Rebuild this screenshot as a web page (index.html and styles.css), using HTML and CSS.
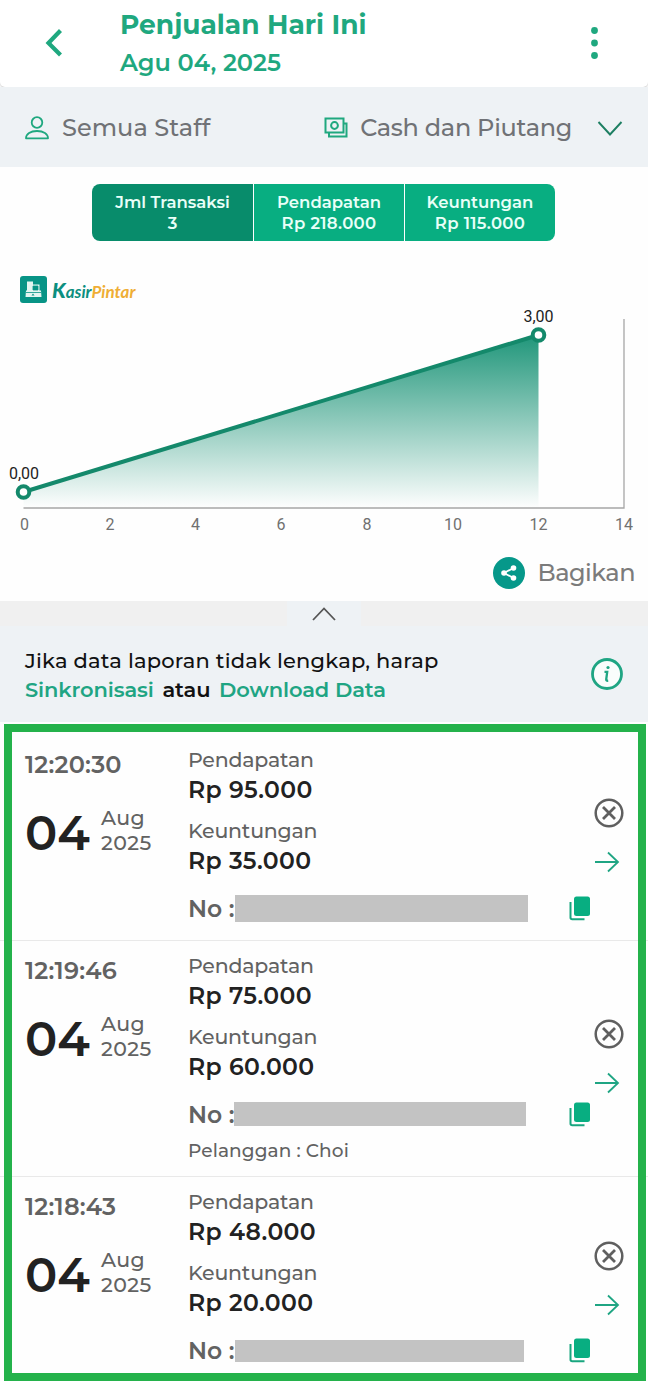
FILE: index.html
```html
<!DOCTYPE html>
<html lang="id">
<head>
    <meta charset="UTF-8">
    <title>Penjualan Hari Ini</title>
    <link rel="stylesheet" href="styles.css">
</head>
<body>
<svg class="sprite" width="0" height="0">
    <symbol id="icon-cancel" viewBox="0 0 30 30">
        <circle cx="15" cy="15" r="13.3" fill="none" stroke="#5f5f5f" stroke-width="2.5"/>
        <path d="M9 9l12 12M21 9L9 21" fill="none" stroke="#5f5f5f" stroke-width="2.8"/>
    </symbol>
    <symbol id="icon-arrow" viewBox="0 0 26 22">
        <path d="M1 11h23M14 1.5L24 11l-10 9.500" fill="none" stroke="#1fa583" stroke-width="1.8"/>
    </symbol>
    <symbol id="icon-copy" viewBox="0 0 22 25">
        <rect x="5" y="0.500" width="16" height="19.500" rx="2.500" fill="#08ae81"/>
        <path d="M1.500 6v15.500q0 1.700 1.700 1.700H15.500" fill="none" stroke="#18a67f" stroke-width="2"/>
    </symbol>
</svg>

<header class="header">
    <svg class="back" width="20" height="30" viewBox="0 0 20 30">
        <path d="M17.500 2.500L5.500 15l12 12" fill="none" stroke="#1fa87f" stroke-width="4.200"/>
    </svg>
    <div class="heading">
        <h1>Penjualan Hari Ini</h1>
        <p>Agu 04, 2025</p>
    </div>
    <svg class="more" width="8" height="34" viewBox="0 0 8 34">
        <g fill="#1fa87f">
            <circle cx="4.500" cy="4.500" r="3.400"/>
            <circle cx="4.500" cy="17" r="3.400"/>
            <circle cx="4.500" cy="29.500" r="3.400"/>
        </g>
    </svg>
</header>

<div class="filters">
    <div class="filter">
        <svg width="24" height="24" viewBox="0 0 24 24">
            <g fill="none" stroke="#1fa87f" stroke-width="1.800">
                <circle cx="12" cy="6.500" r="5.300"/>
                <path d="M1 22.300c0-4.500 4.500-7.300 11-7.300s11 2.800 11 7.300z" stroke-linejoin="round"/>
            </g>
        </svg>
        <span class="staff">Semua Staff</span>
    </div>
    <div class="filter">
        <svg width="24" height="21" viewBox="0 0 24 21">
            <g fill="none" stroke="#1fa87f" stroke-width="2">
                <rect x="1.500" y="1.500" width="18" height="14"/>
                <circle cx="10.500" cy="8.500" r="3.400"/>
                <path d="M20 6.500h2.500V19.500H5V16"/>
            </g>
        </svg>
        <span class="payment">Cash dan Piutang</span>
        <svg class="caret" width="26" height="16" viewBox="0 0 26 16">
            <path d="M1.500 2L13 14.500 24.500 2" fill="none" stroke="#1d7f62" stroke-width="1.900"/>
        </svg>
    </div>
</div>

<section class="report">
    <div class="tabs">
        <div class="tab active">Jml Transaksi<br>3</div>
        <div class="tab">Pendapatan<br><span>Rp 218.000</span></div>
        <div class="tab">Keuntungan<br><span>Rp 115.000</span></div>
    </div>

    <div class="brand">
        <svg width="27" height="27" viewBox="0 0 27 27">
            <rect width="27" height="27" rx="3" fill="#089486"/>
            <path d="M7 5.500h6v3h6.500v6h1.500l.5 6.500H5.500l.5-6.500h1z" fill="#e4f5f1"/>
            <path d="M13 10h5v4h-5zM6 16.500h15" fill="#089486" stroke="#089486" stroke-width=".8"/>
            <path d="M13 17.500l1.500 2h-3z" fill="#089486"/>
        </svg>
        <span class="brand-name"><b>K</b>asir<em>Pintar</em></span>
    </div>

    <svg class="chart" width="648" height="235" viewBox="0 302 648 235">
        <defs>
            <linearGradient id="area" x1="0" y1="335" x2="0" y2="508" gradientUnits="userSpaceOnUse">
                <stop offset="0" stop-color="#20967a"/>
                <stop offset="1" stop-color="#20967a" stop-opacity="0"/>
            </linearGradient>
        </defs>
        <path d="M23.500 492L538.500 335V508H23.500z" fill="url(#area)"/>
        <path d="M23.500 508H624V319" fill="none" stroke="#a6a6a6" stroke-width="1.300"/>
        <path d="M23.500 492L538.500 335" stroke="#14896b" stroke-width="4"/>
        <g fill="#fff" stroke="#14896b" stroke-width="4">
            <circle cx="23.500" cy="492" r="5.800"/>
            <circle cx="538.500" cy="335" r="5.800"/>
        </g>
        <g class="values">
            <text x="24" y="479">0,00</text>
            <text x="538.500" y="321.500">3,00</text>
        </g>
        <g class="axis">
            <text x="24.500" y="529.500">0</text>
            <text x="110" y="529.500">2</text>
            <text x="195.500" y="529.500">4</text>
            <text x="281" y="529.500">6</text>
            <text x="367" y="529.500">8</text>
            <text x="453" y="529.500">10</text>
            <text x="538.500" y="529.500">12</text>
            <text x="624" y="529.500">14</text>
        </g>
    </svg>

    <div class="share">
        <svg width="32" height="32" viewBox="0 0 32 32">
            <circle cx="16" cy="16" r="16" fill="#06988a"/>
            <path d="M20.500 11L11 16l9.500 5" fill="none" stroke="#fff" stroke-width="1.800"/>
            <g fill="#fff">
                <circle cx="20.500" cy="11" r="2.800"/>
                <circle cx="11" cy="16" r="2.800"/>
                <circle cx="20.500" cy="21" r="2.800"/>
            </g>
        </svg>
        <span>Bagikan</span>
    </div>
</section>

<div class="collapse">
    <div class="handle">
        <svg width="24" height="15" viewBox="0 0 24 15">
            <path d="M1 13L12 1.500 23 13" fill="none" stroke="#555" stroke-width="1.800"/>
        </svg>
    </div>
</div>

<div class="notice">
    <div class="notice-text">
        <p class="notice-main">Jika data laporan tidak lengkap, harap</p>
        <p class="notice-links"><a>Sinkronisasi</a> <span>atau</span> <a>Download Data</a></p>
    </div>
    <svg width="32" height="32" viewBox="0 0 32 32">
        <circle cx="16" cy="16" r="14.500" fill="#fafdfc" stroke="#1fa583" stroke-width="2.800"/>
        <circle cx="17" cy="9.500" r="1.600" fill="#1fa583"/>
        <path d="M13.500 13.800h2.700l-1 7.700q-.2 1.500 2 1.200" fill="none" stroke="#1fa583" stroke-width="2.300"/>
    </svg>
</div>

<main class="list">
    <article class="row">
        <div class="when">
            <div class="time">12:20:30</div>
            <div class="date">
                <span class="day">04</span>
                <span class="month">Aug<br>2025</span>
            </div>
        </div>
        <div class="amounts">
            <div class="label">Pendapatan</div>
            <div class="value">Rp 95.000</div>
            <div class="label">Keuntungan</div>
            <div class="value">Rp 35.000</div>
            <div class="number">
                <span>No :</span><i class="mask mask-1"></i>
                <svg width="22" height="25"><use href="#icon-copy"/></svg>
            </div>
        </div>
        <div class="actions">
            <svg width="30" height="30"><use href="#icon-cancel"/></svg>
            <svg width="26" height="22"><use href="#icon-arrow"/></svg>
        </div>
    </article>
    <article class="row">
        <div class="when">
            <div class="time">12:19:46</div>
            <div class="date">
                <span class="day">04</span>
                <span class="month">Aug<br>2025</span>
            </div>
        </div>
        <div class="amounts">
            <div class="label">Pendapatan</div>
            <div class="value">Rp 75.000</div>
            <div class="label">Keuntungan</div>
            <div class="value">Rp 60.000</div>
            <div class="number">
                <span>No :</span><i class="mask mask-2"></i>
                <svg width="22" height="25"><use href="#icon-copy"/></svg>
            </div>
            <div class="customer">Pelanggan : Choi</div>
        </div>
        <div class="actions">
            <svg width="30" height="30"><use href="#icon-cancel"/></svg>
            <svg width="26" height="22"><use href="#icon-arrow"/></svg>
        </div>
    </article>
    <article class="row">
        <div class="when">
            <div class="time">12:18:43</div>
            <div class="date">
                <span class="day">04</span>
                <span class="month">Aug<br>2025</span>
            </div>
        </div>
        <div class="amounts">
            <div class="label">Pendapatan</div>
            <div class="value">Rp 48.000</div>
            <div class="label">Keuntungan</div>
            <div class="value">Rp 20.000</div>
            <div class="number">
                <span>No :</span><i class="mask mask-3"></i>
                <svg width="22" height="25"><use href="#icon-copy"/></svg>
            </div>
        </div>
        <div class="actions">
            <svg width="30" height="30"><use href="#icon-cancel"/></svg>
            <svg width="26" height="22"><use href="#icon-arrow"/></svg>
        </div>
    </article>
    <div class="frame"></div>
</main>
</body>
</html>
```
FILE: styles.css
```css
* {
    box-sizing: border-box;
}
body {
    width: 648px;
    height: 1381px;
    margin: 0;
    overflow: hidden;
    font-family: 'Montserrat', 'Inter', sans-serif;
    font-weight: 500;
    white-space: nowrap;
    background-color: #fefefe;
    color: #626262;
}
h1, p {
    margin: 0;
}
svg {
    display: block;
    flex: none;
}
.sprite {
    position: absolute;
}
.header {
    display: flex;
    height: 87px;
    padding-left: 43px;
    background-color: #fff;
    border-radius: 0 0 5px 5px;
    box-shadow: 0 1px 2px rgba(0, 0, 0, 0.2);
    color: #1fa87f;
}
.back {
    margin-top: 28px;
}
.heading {
    width: 470px;
    margin-left: 57px;
    padding-top: 7px;
}
.heading h1 {
    font-size: 26.500px;
    line-height: 36px;
    font-weight: 700;
}
.heading p {
    font-size: 24px;
    line-height: 40px;
    font-weight: 600;
}
.more {
    margin-top: 26px;
}
.filters {
    display: flex;
    justify-content: space-between;
    height: 80px;
    padding: 1px 25px 0;
    background-color: #eef2f5;
    color: #707276;
    font-size: 24px;
}
.filter {
    display: flex;
    align-items: center;
}
.filter span {
    margin-left: 13px;
    letter-spacing: 0.050px;
}
.filter .payment {
    margin-left: 12px;
    letter-spacing: -0.3px;
}
.caret {
    margin-left: 25px;
}
.report {
    height: 434px;
    padding-top: 17px;
}
.tabs {
    display: flex;
    gap: 1px;
    width: 463px;
    height: 57px;
    margin-left: 92px;
    border-radius: 8px;
    overflow: hidden;
}
.tab {
    width: 150px;
    padding-top: 8px;
    background-color: #08ae81;
    color: #e9fff8;
    font-size: 16.500px;
    line-height: 21px;
    font-weight: 600;
    text-align: center;
}
.tab span {
    letter-spacing: 0.3px;
}
.tab.active {
    width: 161px;
    background-color: #088c6b;
}
.brand {
    display: flex;
    align-items: center;
    height: 27px;
    margin: 35px 0 0 20px;
}
.brand-name {
    margin-left: 5px;
    font-family: 'Lato', sans-serif;
    font-size: 17px;
    font-weight: 700;
    font-style: italic;
    color: #0c8f80;
}
.brand-name b {
    font-size: 21px;
    font-weight: 900;
}
.brand-name em {
    color: #efae35;
}
.chart {
    margin-top: -1px;
}
.chart text {
    font-family: 'Roboto', sans-serif;
    font-size: 16px;
    font-weight: 400;
    text-anchor: middle;
}
.values {
    fill: #222;
}
.axis {
    fill: #707070;
}
.share {
    display: flex;
    align-items: center;
    justify-content: flex-end;
    height: 32px;
    margin-top: 20px;
    padding-right: 13px;
    color: #7b7b7b;
    font-size: 24px;
    line-height: 30px;
}
.share span {
    margin-left: 13px;
    letter-spacing: -0.5px;
}
.collapse {
    display: flex;
    justify-content: center;
    height: 25px;
    background-color: #f0f0f0;
}
.handle {
    width: 74px;
    padding: 6px 25px;
    background-color: #eef2f5;
}
.notice {
    display: flex;
    justify-content: space-between;
    height: 96px;
    padding: 20px 25px 0;
    background-color: #eef2f5;
    font-size: 21px;
    line-height: 29px;
    color: #111;
}
.notice svg {
    margin-top: 12px;
}
.notice-main {
    letter-spacing: 0.2px;
}
.notice-links {
    font-weight: 600;
    letter-spacing: -0.1px;
    word-spacing: 3px;
}
.notice-links a {
    color: #1fa583;
    word-spacing: 0;
}
.list {
    position: relative;
    height: 659px;
    padding-top: 13px;
}
.row {
    display: flex;
    height: 206px;
    padding-left: 25px;
    border-bottom: 1px solid #e9e9e9;
}
.row:nth-child(2) {
    height: 236px;
}
.row:nth-child(3) {
    border-bottom: none;
}
.when {
    width: 163px;
    padding-top: 14px;
}
.time {
    font-size: 24px;
    line-height: 32px;
    font-weight: 600;
    letter-spacing: 0.2px;
}
.date {
    display: flex;
    align-items: center;
    margin-top: 20px;
}
.day {
    width: 76px;
    font-size: 48px;
    line-height: 64px;
    font-weight: 600;
    color: #222;
}
.month {
    padding-bottom: 6px;
    font-size: 20.500px;
    line-height: 25px;
    letter-spacing: 0.4px;
}
.amounts {
    width: 406px;
    padding-top: 11px;
}
.label {
    height: 28px;
    font-size: 20.500px;
    line-height: 28px;
    letter-spacing: -0.2px;
}
.value {
    height: 43px;
    font-size: 23.500px;
    line-height: 32px;
    font-weight: 600;
    letter-spacing: 0.4px;
    color: #222;
}
.number {
    display: flex;
    align-items: center;
    height: 40px;
    font-size: 23.500px;
    font-weight: 600;
}
.number span {
    width: 47px;
}
.number svg {
    margin-left: auto;
    margin-right: 3px;
}
.mask {
    height: 27px;
    background-color: #c3c3c3;
}
.mask-1 {
    width: 293px;
}
.mask-2 {
    width: 292px;
    height: 24px;
    margin-left: -1px;
}
.mask-3 {
    width: 289px;
    height: 22px;
    margin-top: 2px;
}
.customer {
    font-size: 18.500px;
    line-height: 34px;
    letter-spacing: 0.1px;
}
.actions {
    display: flex;
    flex-direction: column;
    justify-content: center;
    gap: 23px;
    padding-bottom: 4px;
}
/* highlight drawn over the transaction rows */
.frame {
    position: absolute;
    inset: 2px 2px 0 4px;
    border: 8px solid #24b24b;
}
```
